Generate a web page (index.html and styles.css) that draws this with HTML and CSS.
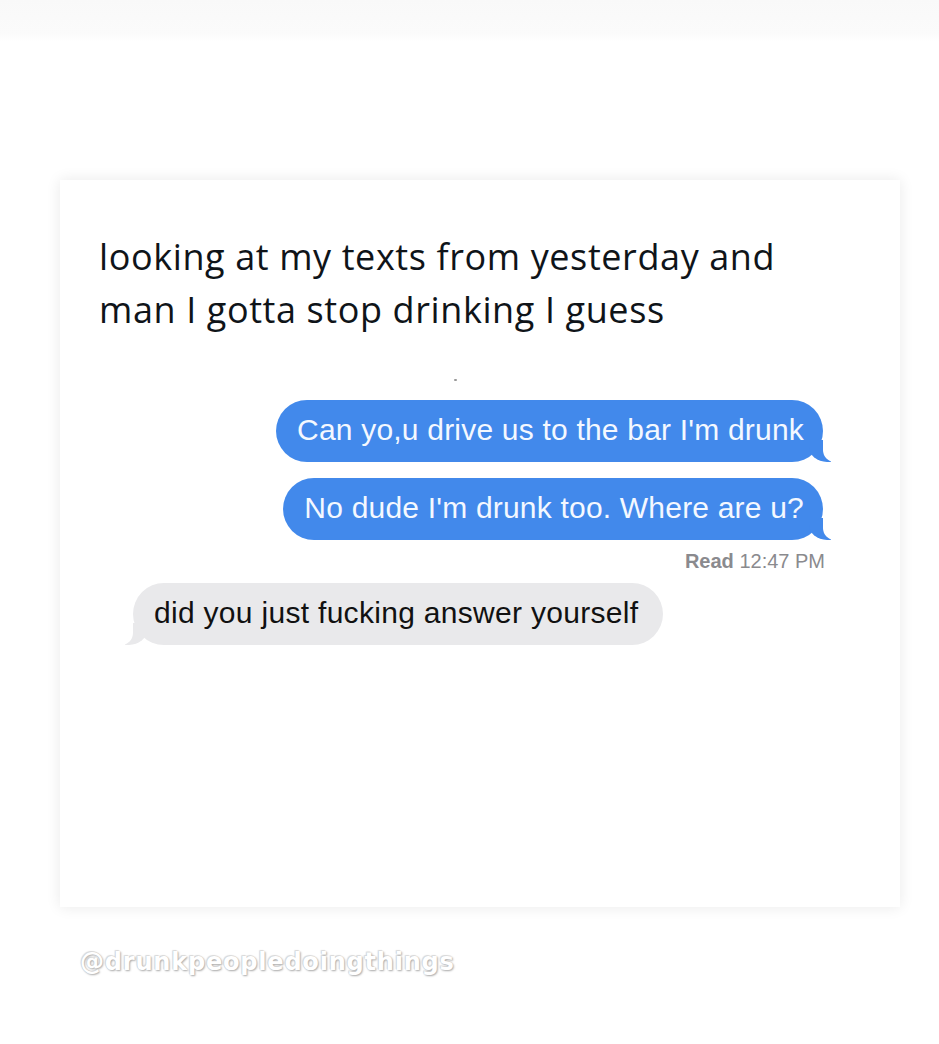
FILE: index.html
```html
<!DOCTYPE html>
<html>
<head>
<meta charset="utf-8">
<link rel="stylesheet" href="styles.css">
</head>
<body>
<div class="topbar"></div>
<main class="card">
  <p class="caption">looking at my texts from yesterday and<br>man I gotta stop drinking I guess</p>
  <div class="dot"></div>
  <div class="thread">
    <div class="bubble sent first">Can yo,u drive us to the bar I'm drunk</div>
    <div class="bubble sent second">No dude I'm drunk too. Where are u?</div>
    <div class="receipt"><b>Read</b> 12:47 PM</div>
    <div class="bubble received">did you just fucking answer yourself</div>
  </div>
</main>
<div class="watermark">@drunkpeopledoingthings</div>
</body>
</html>
```

FILE: styles.css
```css
html, body {
  margin: 0;
  padding: 0;
  background: #ffffff;
}
body {
  width: 939px;
  height: 1044px;
  overflow: hidden;
  font-family: "Liberation Sans", Arial, sans-serif;
}
.topbar {
  height: 42px;
  background: linear-gradient(#f9f9f9, #fbfbfb 80%, #ffffff);
}
.card {
  margin: 138px 0 0 60px;
  width: 840px;
  height: 727px;
  box-sizing: border-box;
  background: #ffffff;
  box-shadow: 0 0 14px rgba(0, 0, 0, 0.09);
  padding: 50px 77px 0 39px;
  position: relative;
}
.caption {
  margin: 0;
  font-family: "Open Sans", "Noto Sans", sans-serif;
  font-size: 36px;
  line-height: 53px;
  color: #0f1419;
  letter-spacing: 0.6px;
}
.dot {
  position: absolute;
  left: 394px;
  top: 199px;
  width: 3px;
  height: 2px;
  background: #999;
  border-radius: 1px;
}
.thread {
  display: flex;
  flex-direction: column;
  align-items: flex-end;
  margin-top: 64px;
}
.bubble {
  position: relative;
  height: 62px;
  box-sizing: border-box;
  display: flex;
  align-items: center;
  padding: 0 19px 2px 21px;
  font-size: 30px;
  letter-spacing: 0.2px;
  border-radius: 31px;
}
.sent {
  background: #4289eb;
  color: #f4f8ff;
}
.second {
  margin-top: 16px;
}
.sent::before {
  content: "";
  position: absolute;
  right: -8px;
  bottom: 0;
  width: 22px;
  height: 22px;
  background: #4289eb;
  border-bottom-left-radius: 18px 15px;
}
.sent::after {
  content: "";
  position: absolute;
  right: -28px;
  bottom: 0;
  width: 28px;
  height: 22px;
  background: #ffffff;
  border-bottom-left-radius: 12px;
}
.receipt {
  margin-top: 8px;
  margin-right: -2px;
  font-size: 20px;
  line-height: 26px;
  color: #8a8a8e;
}
.receipt b {
  font-weight: bold;
  color: #8a8a8e;
}
.received {
  align-self: flex-start;
  margin-left: 34px;
  margin-top: 9px;
  padding-right: 25px;
  letter-spacing: 0.3px;
  background: #e9e9eb;
  color: #111111;
}
.received::before {
  content: "";
  position: absolute;
  left: -8px;
  bottom: 0;
  width: 22px;
  height: 22px;
  background: #e9e9eb;
  border-bottom-right-radius: 18px 15px;
}
.received::after {
  content: "";
  position: absolute;
  left: -28px;
  bottom: 0;
  width: 28px;
  height: 22px;
  background: #ffffff;
  border-bottom-right-radius: 12px;
}
.watermark {
  margin: 40px 0 0 80px;
  font-family: "DejaVu Sans", sans-serif;
  font-weight: bold;
  font-size: 24px;
  line-height: 30px;
  color: #ffffff;
  letter-spacing: 0.8px;
  text-shadow: 0 0 1px #c0c0c0, 1px 1px 2px #a8a8a8, -1px -1px 1px #dddddd;
}
```
